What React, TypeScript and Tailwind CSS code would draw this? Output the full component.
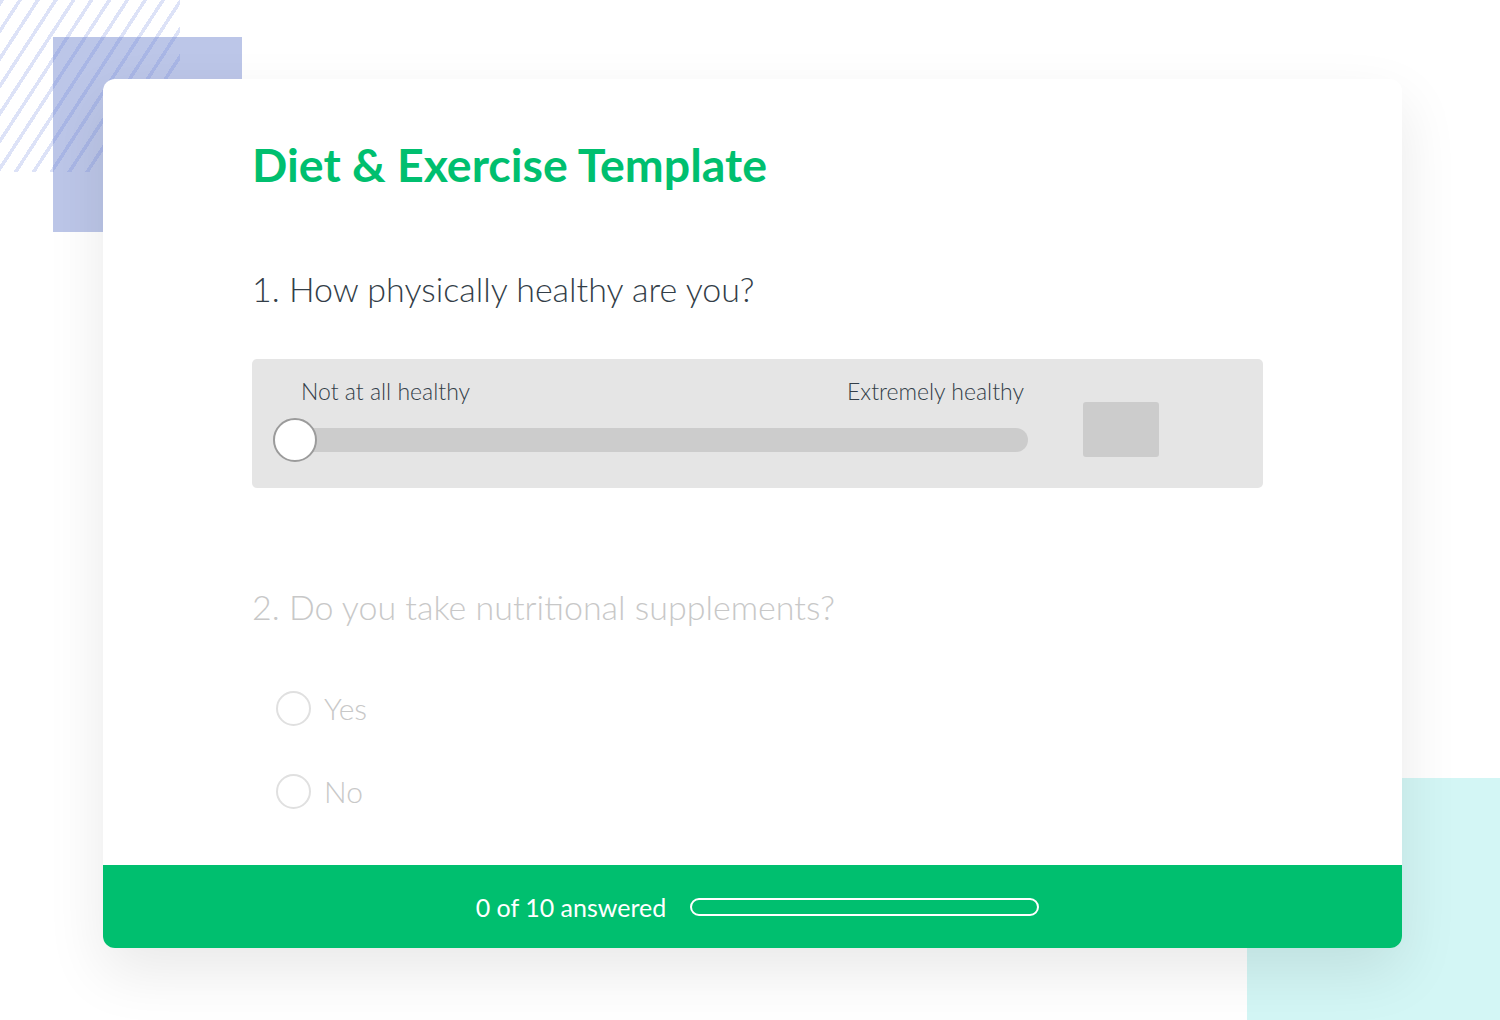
export default function App() {
  return (
    <div className="relative w-full h-[1020px] overflow-hidden bg-white" style={{ fontFamily: "Lato, 'Open Sans', sans-serif" }}>
      {/* decorations behind the card */}
      <div className="absolute left-[53px] top-[37px] w-[189px] h-[195px] bg-[#bcc6e8]" />
      <div className="absolute left-0 top-0 w-[180px] h-[172px] bg-[repeating-linear-gradient(123deg,rgba(100,125,220,0.22)_0px,rgba(100,125,220,0.22)_3.5px,transparent_3.5px,transparent_15px)]" />
      <div className="absolute left-[1247px] top-[778px] w-[253px] h-[242px] bg-[#d3f6f5]" />

      <div className="relative pt-[79px] pl-[103px]">
        <div className="w-[1299px] h-[869px] bg-white rounded-xl shadow-[0_24px_60px_rgba(0,0,0,0.09)] flex flex-col">
          <div className="flex-1 pl-[149px] pt-[57px]">
            <h1 className="text-[46.5px] leading-[56px] font-bold text-[#00bf6f]">
              Diet &amp; Exercise Template
            </h1>

            <h2 className="mt-[76px] text-[34px] leading-[42px] font-light text-[#333e48]">
              1. How physically healthy are you?
            </h2>

            <div className="mt-[49px] w-[1011px] h-[129px] bg-[#e5e5e5] rounded-[5px] flex items-start">
              <div className="w-[776px] pl-[21px] pt-[17px]">
                <div className="flex justify-between pl-[28px] pr-[4px] text-[23px] leading-[30px] text-[#333e48] font-light">
                  <span>Not at all healthy</span>
                  <span>Extremely healthy</span>
                </div>
                <div className="relative mt-[22px] h-[24px] w-[755px] rounded-full bg-[#cccccc]">
                  <div className="absolute left-0 top-[-10px] w-[44px] h-[44px] rounded-full bg-white border-2 border-[#9b9b9b]" />
                </div>
              </div>
              <div className="ml-[55px] mt-[43px] w-[76px] h-[55px] rounded-[3px] bg-[#cccccc]" />
            </div>

            <h2 className="mt-[98px] text-[34px] leading-[42px] font-light text-[#c8c8c8]">
              2. Do you take nutritional supplements?
            </h2>

            <div className="mt-[62px] pl-[24px] flex flex-col gap-[47px]">
              {["Yes", "No"].map((o) => (
                <div key={o} className="flex items-center gap-[13px]">
                  <div className="w-[35px] h-[35px] rounded-full border-2 border-[#e0e0e0]" />
                  <span className="text-[30px] leading-[36px] font-light text-[#c8c8c8]">{o}</span>
                </div>
              ))}
            </div>
          </div>

          <div className="h-[83px] bg-[#00bf6f] rounded-b-xl flex items-center justify-center gap-[24px] pl-[10px]">
            <span className="text-[25px] leading-[30px] text-white">0 of 10 answered</span>
            <div className="w-[349px] h-[18px] rounded-full border-2 border-white" />
          </div>
        </div>
      </div>
    </div>
  );
}
